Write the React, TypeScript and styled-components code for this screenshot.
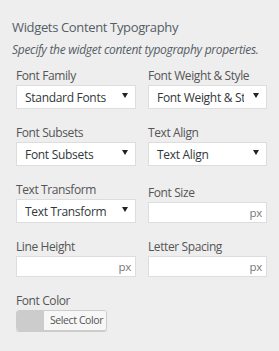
import React from "react";
import styled, { createGlobalStyle } from "styled-components";

const Global = createGlobalStyle`
  html, body { margin: 0; padding: 0; background: #eeeeee; }
  body { font-family: "Open Sans", "Noto Sans", sans-serif; }
  * { box-sizing: border-box; }
`;

const Panel = styled.div`
  width: 279px;
  height: 351px;
  background: #eeeeee;
  padding: 17px 12px 0 12px;
`;

const Title = styled.h3`
  margin: 0;
  font-size: 13px;
  line-height: 20px;
  font-weight: 400;
  color: #555d66;
  letter-spacing: -0.35px;
`;

const Description = styled.p`
  margin: 5px 0 0 0;
  font-size: 12px;
  line-height: 16px;
  font-style: italic;
  color: #555d66;
  letter-spacing: -0.3px;
  white-space: nowrap;
`;

const Grid = styled.div`
  display: grid;
  grid-template-columns: 120px 119px;
  column-gap: 12px;
  row-gap: 15px;
  padding: 0 0 0 4px;
  margin-top: 9px;
`;

const Field = styled.div<{ $shift?: number }>`
  display: flex;
  flex-direction: column;
  padding-top: ${(p) => p.$shift ?? 0}px;
`;

const Label = styled.label`
  font-size: 12px;
  line-height: 17px;
  color: #555;
  letter-spacing: -0.4px;
  margin-bottom: 1px;
  white-space: nowrap;
`;

const SelectBox = styled.div`
  height: 24px;
  background: #fff;
  border: 1px solid #dddddd;
  display: flex;
  align-items: center;
  padding: 0 7px 0 8px;
  gap: 9px;
`;

const SelectText = styled.span`
  flex: 1;
  min-width: 0;
  font-size: 12px;
  color: #32373c;
  white-space: nowrap;
  overflow: hidden;
  letter-spacing: -0.3px;
`;

const Arrow = styled.svg`
  flex: none;
  margin-top: -3px;
`;

const InputBox = styled.div`
  height: 21px;
  background: #fff;
  border: 1px solid #dddddd;
  display: flex;
  align-items: center;
  justify-content: flex-end;
  padding: 0 4px;
`;

const Unit = styled.span`
  font-size: 11.5px;
  color: #777;
  letter-spacing: -0.3px;
`;

const ColorButton = styled.div`
  display: flex;
  width: 91px;
  height: 21px;
  border: 1px solid #cccccc;
  border-radius: 3px;
  overflow: hidden;
  box-shadow: 0 1px 0 #cccccc;
`;

const Swatch = styled.span`
  width: 27px;
  background: #cccccc;
`;

const ColorLabel = styled.span`
  flex: 1;
  background: #f7f7f7;
  font-size: 10.5px;
  line-height: 19px;
  color: #555;
  padding-left: 6px;
  letter-spacing: -0.4px;
  white-space: nowrap;
`;

function Select({ value }: { value: string }) {
  return (
    <SelectBox>
      <SelectText>{value}</SelectText>
      <Arrow width="6" height="5" viewBox="0 0 6 5">
        <path d="M0 0 H6 L3 5 Z" fill="#222" />
      </Arrow>
    </SelectBox>
  );
}

function UnitInput() {
  return (
    <InputBox>
      <Unit>px</Unit>
    </InputBox>
  );
}

export default function App() {
  return (
    <>
      <Global />
      <Panel>
        <Title>Widgets Content Typography</Title>
        <Description>Specify the widget content typography properties.</Description>
        <Grid>
          <Field>
            <Label>Font Family</Label>
            <Select value="Standard Fonts" />
          </Field>
          <Field>
            <Label>Font Weight &amp; Style</Label>
            <Select value="Font Weight & Style" />
          </Field>
          <Field>
            <Label>Font Subsets</Label>
            <Select value="Font Subsets" />
          </Field>
          <Field>
            <Label>Text Align</Label>
            <Select value="Text Align" />
          </Field>
          <Field>
            <Label>Text Transform</Label>
            <Select value="Text Transform" />
          </Field>
          <Field $shift={3}>
            <Label>Font Size</Label>
            <UnitInput />
          </Field>
          <Field>
            <Label>Line Height</Label>
            <UnitInput />
          </Field>
          <Field>
            <Label>Letter Spacing</Label>
            <UnitInput />
          </Field>
          <Field>
            <Label>Font Color</Label>
            <ColorButton>
              <Swatch />
              <ColorLabel>Select Color</ColorLabel>
            </ColorButton>
          </Field>
        </Grid>
      </Panel>
    </>
  );
}
